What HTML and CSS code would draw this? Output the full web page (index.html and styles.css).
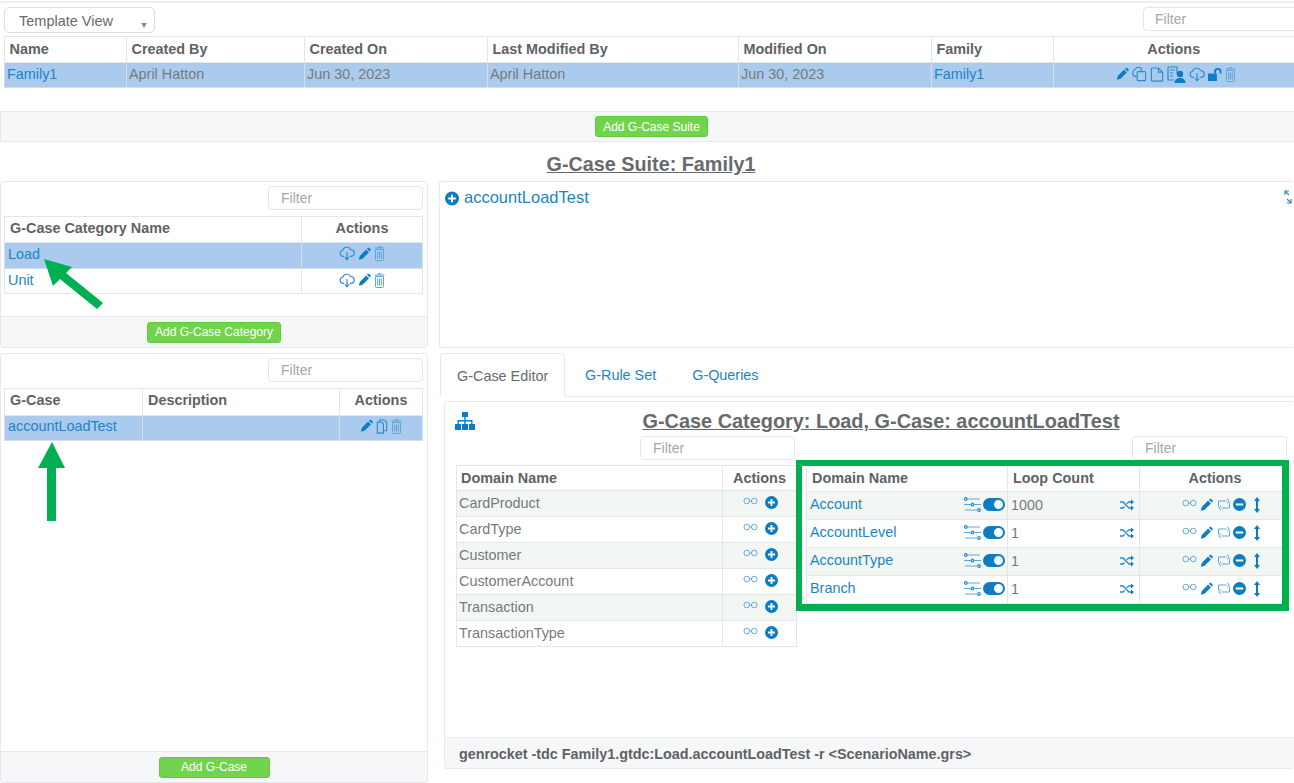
FILE: index.html
```html
<!DOCTYPE html>
<html lang="en">
<head>
<meta charset="utf-8">
<title>G-Case Suite</title>
<link rel="stylesheet" href="styles.css">
</head>
<body>
<svg class="sprite" xmlns="http://www.w3.org/2000/svg">
  <symbol id="pencil" viewBox="0 0 16 16"><path d="M1 15l1.2-4.6L10 2.6l3.4 3.4-7.8 7.8z"/><path d="M11 1.6l.9-.9a1.3 1.3 0 0 1 1.8 0l1.6 1.6a1.3 1.3 0 0 1 0 1.8l-.9.9z"/></symbol>
  <symbol id="copy" viewBox="0 0 16 16"><path class="ol" d="M5 10.500H2.500L1 9V5.500L5 1h3.500L10 2.500V5.500"/><path class="ol" d="M6.500 5.500h7a1 1 0 0 1 1 1v7.500a1 1 0 0 1-1 1h-7a1 1 0 0 1-1-1V6.500a1 1 0 0 1 1-1z"/></symbol>
  <symbol id="file" viewBox="0 0 14 16"><path class="ol" d="M1 2a1 1 0 0 1 1-1h6.500L13 5.500V14a1 1 0 0 1-1 1H2a1 1 0 0 1-1-1zM8.500 1v4.500H13"/></symbol>
  <symbol id="docs" viewBox="0 0 12 16"><path class="ol" d="M3.500 3.500V1h5l2.500 2.500V12.500H8.500M1 3.500h5l1.500 1.500v10H1z"/></symbol>
  <symbol id="docuser" viewBox="0 0 19 17"><path class="ol" d="M1 1h9v7M1 1v13h6"/><path class="ln" d="M3 4h5M3 7h3M3 10h3"/><circle cx="13" cy="8" r="3.200"/><path d="M7.500 17c0-3.500 2.500-5 5.500-5s5.500 1.500 5.500 5z"/></symbol>
  <symbol id="cloud" viewBox="0 0 17 15"><path class="ol" d="M5.500 10.500H4A3.300 3.300 0 0 1 3.800 4 4.700 4.700 0 0 1 12.500 3.500 3.500 3.500 0 0 1 13 10.500h-1.500"/><path class="ol" d="M8.500 6v8M6.300 11.500l2.200 2.700 2.200-2.700"/></symbol>
  <symbol id="unlock" viewBox="0 0 15 14"><path d="M0 6h9.500v8H0z"/><path class="ol th" d="M7.500 6V4a3 3 0 0 1 6 0v2"/></symbol>
  <symbol id="trash" viewBox="0 0 11 15"><path class="ol lt" d="M1.500 3.500h8v10a1 1 0 0 1-1 1h-6a1 1 0 0 1-1-1zM.500 2h10M4 2V.800h3V2M3.700 5.500v7M5.500 5.500v7M7.300 5.500v7"/></symbol>
  <symbol id="glasses" viewBox="0 0 16 8"><circle class="ol lt" cx="4" cy="4" r="3"/><circle class="ol lt" cx="12" cy="4" r="3"/><path class="ol lt" d="M7 4h2"/></symbol>
  <symbol id="plus" viewBox="0 0 14 14"><path fill-rule="evenodd" d="M7 0a7 7 0 1 1 0 14A7 7 0 0 1 7 0zM6 3.200v2.800H3.200v2H6v2.800h2V8h2.800V6H8V3.200z"/></symbol>
  <symbol id="minus" viewBox="0 0 14 14"><path fill-rule="evenodd" d="M7 0a7 7 0 1 1 0 14A7 7 0 0 1 7 0zM3 5.800v2.400h8V5.800z"/></symbol>
  <symbol id="updown" viewBox="0 0 6 16"><path d="M3 0l3 4H4v8h2l-3 4-3-4h2V4H0z"/></symbol>
  <symbol id="retweet" viewBox="0 0 14 13"><path class="ol lt" d="M1.500 8.500V3H9.500M10 .800l2.400 2.200L10 5.200M12.500 4.500V10H4.500M4 7.800L1.700 10 4 12.200"/></symbol>
  <symbol id="sliders" viewBox="0 0 17 15"><path class="ol lt" d="M3 2h13M0 7.500h7M10 7.500h7M1 13h12"/><circle class="ol" cx="1.800" cy="2" r="1.300"/><circle class="ol" cx="8.500" cy="7.500" r="1.300"/><circle class="ol" cx="15" cy="13" r="1.300"/></symbol>
  <symbol id="toggle" viewBox="0 0 22 13"><path fill-rule="evenodd" d="M6.500 0h9a6.500 6.500 0 0 1 0 13h-9a6.500 6.500 0 0 1 0-13zM15.500 2a4.500 4.500 0 1 0 0 9 4.500 4.500 0 0 0 0-9z"/></symbol>
  <symbol id="shuffle" viewBox="0 0 14 12"><path class="ol th2" d="M0 3h3l6 6h2.500M0 9h3l1.500-1.500M6.700 4.800L9 3h2.500"/><path d="M11 .500L14 3l-3 2.500zM11 6.500L14 9l-3 2.500z"/></symbol>
  <symbol id="sitemap" viewBox="0 0 20 18"><path d="M7 0h6v5H7zM0 12h6v6H0zM7 12h6v6H7zM14 12h6v6h-6z"/><path d="M9.300 5h1.400v3H17.500v4h-1.400V9.400h-5.400V12H9.300V9.400H3.900V12H2.500V8h6.800z"/></symbol>
  <symbol id="expand" viewBox="0 0 8 14"><path class="ol" d="M1 5V1h4M1 1l4 4M7 9v4H3M7 13l-4-4"/></symbol>
</svg>

<section class="top">
  <div class="top-bar">
    <div class="select">Template View<span class="caret"></span></div>
    <input class="filter filter-top" placeholder="Filter">
  </div>
  <table class="grid tbl-top">
    <colgroup><col class="c122"><col class="c178"><col class="c183"><col class="c251"><col class="c193"><col class="c122"><col class="c241"></colgroup>
    <tr class="h26"><th>Name</th><th>Created By</th><th>Created On</th><th>Last Modified By</th><th>Modified On</th><th>Family</th><th class="ctr">Actions</th></tr>
    <tr class="h25 sel"><td><a>Family1</a></td><td>April Hatton</td><td>Jun 30, 2023</td><td>April Hatton</td><td>Jun 30, 2023</td><td><a>Family1</a></td>
      <td><div class="acts a-top"><svg class="i13"><use href="#pencil"/></svg><svg class="i15"><use href="#copy"/></svg><svg class="i14"><use href="#file"/></svg><svg class="i19"><use href="#docuser"/></svg><svg class="i16"><use href="#cloud"/></svg><svg class="i14"><use href="#unlock"/></svg><svg class="i11"><use href="#trash"/></svg></div></td></tr>
  </table>
  <div class="foot foot-top"><button class="btn">Add G-Case Suite</button></div>
</section>

<h1 class="title suite">G-Case Suite: Family1</h1>

<main class="layout">
  <section class="panel p-cat">
    <div class="filter-row"><input class="filter" placeholder="Filter"></div>
    <table class="grid tbl-side">
      <colgroup><col class="c297"><col class="c121"></colgroup>
      <tr class="h26"><th>G-Case Category Name</th><th class="ctr">Actions</th></tr>
      <tr class="h26 sel"><td><a>Load</a></td><td><div class="acts"><svg class="i16"><use href="#cloud"/></svg><svg class="i13"><use href="#pencil"/></svg><svg class="i11"><use href="#trash"/></svg></div></td></tr>
      <tr class="h25"><td><a>Unit</a></td><td><div class="acts"><svg class="i16"><use href="#cloud"/></svg><svg class="i13"><use href="#pencil"/></svg><svg class="i11"><use href="#trash"/></svg></div></td></tr>
    </table>
    <div class="foot"><button class="btn btn-cat">Add G-Case Category</button></div>
  </section>

  <section class="panel p-tree">
    <div class="tree"><svg class="i14 tree-ic"><use href="#plus"/></svg><a>accountLoadTest</a></div>
    <svg class="expand"><use href="#expand"/></svg>
  </section>

  <section class="panel p-case">
    <div class="filter-row"><input class="filter" placeholder="Filter"></div>
    <table class="grid tbl-side">
      <colgroup><col class="c138"><col class="c197"><col class="c83"></colgroup>
      <tr class="h27"><th>G-Case</th><th>Description</th><th class="ctr">Actions</th></tr>
      <tr class="h25 sel"><td><a>accountLoadTest</a></td><td></td><td><div class="acts"><svg class="i13"><use href="#pencil"/></svg><svg class="i12"><use href="#docs"/></svg><svg class="i11"><use href="#trash"/></svg></div></td></tr>
    </table>
    <div class="foot"><button class="btn btn-case">Add G-Case</button></div>
  </section>

  <section class="editor">
    <nav class="tabs"><span class="tab active">G-Case Editor</span><a class="tab">G-Rule Set</a><a class="tab">G-Queries</a></nav>
    <div class="panel inner">
      <div class="inner-head"><svg class="sitemap"><use href="#sitemap"/></svg><h2 class="title sub">G-Case Category: Load, G-Case: accountLoadTest</h2></div>
      <div class="domains">
        <div class="dom-left">
          <div class="filter-row f-in"><input class="filter" placeholder="Filter"></div>
          <table class="grid tbl-dl">
            <colgroup><col class="c266"><col class="c74"></colgroup>
            <tr class="h25"><th>Domain Name</th><th class="ctr">Actions</th></tr>
            <tr class="h26 st"><td>CardProduct</td><td><div class="acts a-add"><svg class="i15g"><use href="#glasses"/></svg><svg class="i13r"><use href="#plus"/></svg></div></td></tr>
            <tr class="h26"><td>CardType</td><td><div class="acts a-add"><svg class="i15g"><use href="#glasses"/></svg><svg class="i13r"><use href="#plus"/></svg></div></td></tr>
            <tr class="h26 st"><td>Customer</td><td><div class="acts a-add"><svg class="i15g"><use href="#glasses"/></svg><svg class="i13r"><use href="#plus"/></svg></div></td></tr>
            <tr class="h26"><td>CustomerAccount</td><td><div class="acts a-add"><svg class="i15g"><use href="#glasses"/></svg><svg class="i13r"><use href="#plus"/></svg></div></td></tr>
            <tr class="h26 st"><td>Transaction</td><td><div class="acts a-add"><svg class="i15g"><use href="#glasses"/></svg><svg class="i13r"><use href="#plus"/></svg></div></td></tr>
            <tr class="h26"><td>TransactionType</td><td><div class="acts a-add"><svg class="i15g"><use href="#glasses"/></svg><svg class="i13r"><use href="#plus"/></svg></div></td></tr>
          </table>
        </div>
        <div class="dom-right">
          <div class="filter-row f-in2"><input class="filter" placeholder="Filter"></div>
          <table class="grid">
            <colgroup><col class="c201"><col class="c132"><col class="c151"></colgroup>
            <tr class="h26"><th>Domain Name</th><th>Loop Count</th><th class="ctr">Actions</th></tr>
            <tr class="h28 st"><td><div class="namecell"><a>Account</a><svg class="i16s"><use href="#sliders"/></svg><svg class="tog"><use href="#toggle"/></svg></div></td><td><div class="loopcell"><span>1000</span><svg class="shuf"><use href="#shuffle"/></svg></div></td><td><div class="acts a-dom"><svg class="i15g"><use href="#glasses"/></svg><svg class="i13"><use href="#pencil"/></svg><svg class="i14t"><use href="#retweet"/></svg><svg class="i13r"><use href="#minus"/></svg><svg class="ud"><use href="#updown"/></svg></div></td></tr>
            <tr class="h28"><td><div class="namecell"><a>AccountLevel</a><svg class="i16s"><use href="#sliders"/></svg><svg class="tog"><use href="#toggle"/></svg></div></td><td><div class="loopcell"><span>1</span><svg class="shuf"><use href="#shuffle"/></svg></div></td><td><div class="acts a-dom"><svg class="i15g"><use href="#glasses"/></svg><svg class="i13"><use href="#pencil"/></svg><svg class="i14t"><use href="#retweet"/></svg><svg class="i13r"><use href="#minus"/></svg><svg class="ud"><use href="#updown"/></svg></div></td></tr>
            <tr class="h28 st"><td><div class="namecell"><a>AccountType</a><svg class="i16s"><use href="#sliders"/></svg><svg class="tog"><use href="#toggle"/></svg></div></td><td><div class="loopcell"><span>1</span><svg class="shuf"><use href="#shuffle"/></svg></div></td><td><div class="acts a-dom"><svg class="i15g"><use href="#glasses"/></svg><svg class="i13"><use href="#pencil"/></svg><svg class="i14t"><use href="#retweet"/></svg><svg class="i13r"><use href="#minus"/></svg><svg class="ud"><use href="#updown"/></svg></div></td></tr>
            <tr class="h28"><td><div class="namecell"><a>Branch</a><svg class="i16s"><use href="#sliders"/></svg><svg class="tog"><use href="#toggle"/></svg></div></td><td><div class="loopcell"><span>1</span><svg class="shuf"><use href="#shuffle"/></svg></div></td><td><div class="acts a-dom"><svg class="i15g"><use href="#glasses"/></svg><svg class="i13"><use href="#pencil"/></svg><svg class="i14t"><use href="#retweet"/></svg><svg class="i13r"><use href="#minus"/></svg><svg class="ud"><use href="#updown"/></svg></div></td></tr>
          </table>
        </div>
      </div>
      <div class="cmd">genrocket -tdc Family1.gtdc:Load.accountLoadTest -r &lt;ScenarioName.grs&gt;</div>
    </div>
  </section>
</main>

<svg class="overlay" xmlns="http://www.w3.org/2000/svg" viewBox="0 0 1294 783">
  <polygon class="arrow" points="44,259 72,267 66,273 103,303 97,309 60,279 53,286"/>
  <polygon class="arrow" points="52,442 65,468 56,468 56,521 47,521 47,468 38,468"/>
</svg>
<div class="highlight"></div>
</body>
</html>
```
FILE: styles.css
```css
* { box-sizing: border-box; }
html, body { margin: 0; padding: 0; }
body {
  position: relative;
  width: 1294px;
  height: 783px;
  overflow: hidden;
  background: #fff;
  color: #676a6c;
  font-family: "Liberation Sans", Arial, sans-serif;
  font-size: 14px;
}
.sprite { display: none; }
a { color: #1c84c6; text-decoration: none; }
svg { fill: #0c7cc4; display: block; flex: none; }
.ol { fill: none; stroke: #2a8ccc; stroke-width: 1.2; }
.ol.lt { stroke: #5da6d8; stroke-width: 1; }
.ol.th { stroke: #0c7cc4; stroke-width: 2; }
.ol.th2 { stroke: #2a86c6; stroke-width: 1.3; }
.ln { fill: none; stroke: #2a8ccc; stroke-width: 1; }

/* Top */
.top { margin-top: 1px; border-top: 2px solid #eceef0; }
.top-bar { display: flex; justify-content: space-between; align-items: flex-start; padding: 4px 0 0 4px; height: 33px; }
.select {
  width: 151px; height: 26px; padding: 5px 0 0 14px;
  border: 1px solid #dcdee0; border-radius: 5px;
  font-size: 14.5px; position: relative;
}
.caret {
  position: absolute; left: 136px; top: 15px;
  border-left: 3.5px solid transparent; border-right: 3.5px solid transparent; border-top: 5px solid #8a8d90;
}
.filter {
  width: 155px; height: 24px; padding: 0 0 0 12px;
  border: 1px solid #e5e6e7; border-radius: 4px;
  font: 14px "Liberation Sans", Arial, sans-serif; color: #676a6c;
  background: #fff; outline: none;
}
.filter::placeholder { color: #a5a7a9; opacity: 1; }
.filter-top { width: 161px; margin-right: -10px; padding-left: 11px; }

/* Tables */
.grid { border-collapse: collapse; table-layout: fixed; width: 100%; }
.grid th, .grid td { border: 1px solid #e4e6e8; text-align: left; white-space: nowrap; overflow: hidden; }
.grid th { padding: 0 5px 2px 5px; font-weight: 700; font-size: 14.4px; color: #5f6265; }
.grid td { padding: 0 3px 2px; font-size: 14.4px; color: #777a7c; }
.grid a { font-size: 14.4px; }
.grid th.ctr { text-align: center; }
.h25 { height: 25px; }
.h26 { height: 26px; }
.h27 { height: 27px; }
.h28 { height: 28px; }
.sel td { background: #abcbee; border-color: #d6dde4; }
.st td { background: #f3f7f4; }
.tbl-top { margin-left: 4px; width: 1290px; }
.grid.tbl-top td { padding-left: 2px; }
.grid.tbl-top th { padding-left: 4.5px; }
.tbl-dl.grid td { padding-left: 2px; }
.tbl-dl.grid th { padding: 0 4px 0; }
.c122 { width: 122px; } .c121 { width: 121px; } .c178 { width: 178px; } .c183 { width: 183px; } .c251 { width: 251px; }
.c193 { width: 193px; } .c241 { width: 241px; } .c297 { width: 297px; }
.c138 { width: 138px; } .c197 { width: 197px; } .c83 { width: 83px; }
.c266 { width: 266px; } .c74 { width: 74px; } .c201 { width: 201px; } .c132 { width: 132px; } .c151 { width: 151px; }

.acts { display: flex; justify-content: center; align-items: center; gap: 3px; }
.a-top { padding-left: 4px; }
.i13 { width: 13px; height: 14px; }
.i15 { width: 15px; height: 16px; }
.i14 { width: 14px; height: 15px; }
.i19 { width: 19px; height: 17px; }
.i16 { width: 16px; height: 15px; }
.i11 { width: 11px; height: 15px; }
.i12 { width: 12px; height: 15px; }
.i15g { width: 15px; height: 8px; margin-top: -3px; }
.i13r { width: 13px; height: 13px; }
.i14t { width: 14px; height: 13px; margin: 0 -1px 0 1px; }
.ud { width: 6px; height: 16px; margin-left: 5px; }
.a-add { gap: 7px; padding-left: 3px; }
.a-dom { gap: 3px; padding-left: 11px; }
.i16s { width: 17px; height: 15px; margin-left: auto; }
.tog { width: 22px; height: 13px; margin: 0 -1px 0 2px; }
.shuf { width: 14px; height: 12px; margin-left: auto; margin-right: 2px; }
.namecell, .loopcell { display: flex; align-items: center; }
.namecell a { position: relative; top: -1px; }

/* Footers and buttons */
.foot {
  height: 31px; margin-top: auto; background: #f6f7f9;
  border-top: 1px solid #e7eaec; display: flex; justify-content: center; align-items: center;
}
.foot-top { margin-top: 23px; padding-left: 8px; border-bottom: 1px solid #e7eaec; border-left: 1px solid #e7eaec; }
.btn {
  height: 21px; padding: 0 7px; border: 1px solid #62c83e; border-radius: 3px;
  background: #72d34c; color: #fff; font: 12px "Liberation Sans", Arial, sans-serif;
}
.btn-cat { width: 134px; padding: 0; }
.btn-case { width: 111px; }

/* Titles */
.title { margin: 0; font-weight: 700; text-decoration: underline; color: #676a6c; text-align: center; }
.suite { font-size: 19.8px; height: 39px; padding: 11px 0 0 8px; line-height: 23px; }
.sub { flex: 1; font-size: 19.9px; line-height: 22px; }

/* Layout */
.layout { display: grid; grid-template-columns: 428px 855px; grid-template-rows: 167px 430px; column-gap: 11px; row-gap: 5px; }
.panel { border: 1px solid #e7eaec; border-radius: 3px; display: flex; flex-direction: column; }
.filter-row { display: flex; justify-content: flex-end; padding: 4px 4px 6px 0; }
.tbl-side { margin-left: 3px; width: 418px; }
.tbl-side.grid th, .tbl-side .sel td { padding-bottom: 4px; }
.p-tree { position: relative; border-right: 0; }
.tree { display: flex; align-items: center; gap: 5px; padding: 6px 0 0 5px; font-size: 16.5px; }
.tree-ic { margin-top: 2px; }
.expand { position: absolute; right: 2px; top: 8px; width: 8px; height: 14px; }

/* Editor */
.editor { display: flex; flex-direction: column; height: 430px; }
.tabs { display: flex; height: 44px; border-bottom: 1px solid #e7eaec; padding-left: 1px; }
.tab { padding: 14px 18px 0; font-size: 14.4px; height: 44px; }
.tab.active { width: 125px; padding-left: 16px; padding-right: 0; border: 1px solid #e7eaec; border-bottom: 1px solid #fff; border-radius: 4px 4px 0 0; }
.tab:nth-child(2) { padding-left: 20px; }
.inner { margin: 4px 0 0 5px; height: 368px; border-right: 0; }
.inner-head { display: flex; align-items: flex-start; height: 34px; padding: 8px 7px 0 10px; }
.sitemap { width: 20px; height: 18px; margin-top: 2px; }
.domains { display: flex; flex: 1; padding-left: 11px; gap: 9px; }
.dom-left { width: 341px; }
.dom-right { width: 484px; }
.filter-row.f-in, .filter-row.f-in2 { padding: 0 2px 5px 0; }
.f-in2 .filter { margin-right: 1px; }
.cmd {
  height: 31px; padding: 8px 0 0 14px; background: #f6f7f9; border-top: 1px solid #e7eaec;
  font-weight: 700; font-size: 14.35px; color: #5f6265;
}

/* Annotations */
.overlay { position: absolute; left: 0; top: 0; width: 1294px; height: 783px; pointer-events: none; }
.arrow { fill: #00b050; }
.highlight { position: absolute; left: 796px; top: 460px; width: 493px; height: 151px; border: 6px solid #00b050; border-right-width: 7px; border-bottom-width: 7px; pointer-events: none; }
```
